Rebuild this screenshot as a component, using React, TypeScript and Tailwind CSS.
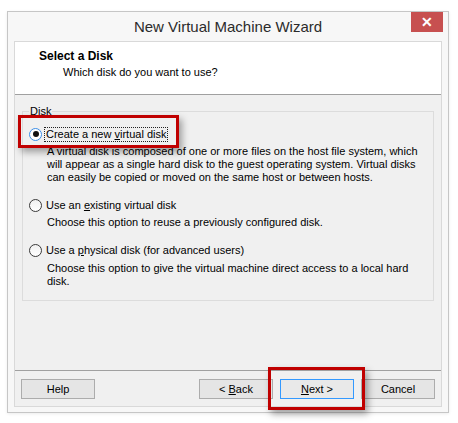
import React from "react";

type RadioOption = {
  label: React.ReactNode;
  description: React.ReactNode;
  checked?: boolean;
};

function RadioDot({ checked }: { checked?: boolean }) {
  return (
    <span
      className={
        checked
          ? "flex h-[13px] w-[13px] shrink-0 items-center justify-center rounded-full border border-[#3c8ee6] bg-white"
          : "flex h-[13px] w-[13px] shrink-0 items-center justify-center rounded-full border border-[#3a3a3a] bg-gradient-to-b from-[#f0f0f0] to-white"
      }
    >
      {checked && <span className="h-[6px] w-[6px] rounded-full bg-[#111]" />}
    </span>
  );
}

function DiskOption({
  option,
  first,
  last,
}: {
  option: RadioOption;
  first?: boolean;
  last?: boolean;
}) {
  return (
    <div className={first ? "" : "mt-[13px]"}>
      <div className="flex h-[16px] items-center gap-[2px]">
        <RadioDot checked={option.checked} />
        <span
          className={
            option.checked
              ? "border border-dotted border-[#222] px-[1px] leading-[13px]"
              : "border border-transparent px-[1px] leading-[13px]"
          }
        >
          {option.label}
        </span>
      </div>
      <p
        className={
          last
            ? "mt-[4px] whitespace-nowrap pl-[18px] leading-[13px]"
            : "mt-[3px] whitespace-nowrap pl-[18px] leading-[13px]"
        }
      >
        {option.description}
      </p>
    </div>
  );
}

function WizardButton({
  children,
  focused,
}: {
  children: React.ReactNode;
  focused?: boolean;
}) {
  return (
    <button
      className={
        focused
          ? "h-[20px] w-[74px] border border-[#3399ff] bg-[#e9e9e9] text-center leading-[18px] text-black"
          : "h-[20px] w-[74px] border border-[#acacac] bg-[#e5e5e5] text-center leading-[18px] text-black"
      }
    >
      {children}
    </button>
  );
}

const options: RadioOption[] = [
  {
    label: (
      <>
        Create a new <u>v</u>irtual disk
      </>
    ),
    description: (
      <>
        A virtual disk is composed of one or more files on the host file system, which
        <br />
        will appear as a single hard disk to the guest operating system. Virtual disks
        <br />
        can easily be copied or moved on the same host or between hosts.
      </>
    ),
    checked: true,
  },
  {
    label: (
      <>
        Use an <u>e</u>xisting virtual disk
      </>
    ),
    description: <>Choose this option to reuse a previously configured disk.</>,
  },
  {
    label: (
      <>
        Use a <u>p</u>hysical disk (for advanced users)
      </>
    ),
    description: (
      <>
        Choose this option to give the virtual machine direct access to a local hard
        <br />
        disk.
      </>
    ),
  },
];

export default function App() {
  return (
    <div className="relative h-[423px] w-[458px] overflow-hidden bg-white pl-[7px] pt-[11px] font-['Liberation_Sans',sans-serif] text-[11px] text-black">
      {/* dialog window */}
      <div className="flex h-[402px] w-[442px] flex-col border border-[#c6c6c6] bg-[#f7f7f7] shadow-[0_1px_3px_rgba(0,0,0,0.08)]">
        <div className="grid h-[29px] grid-cols-[1fr_auto_1fr]">
          <div />
          <div className="text-[15px] leading-[29px] text-[#2b2b2b]">
            New Virtual Machine Wizard
          </div>
          <div className="flex justify-end pr-[5px]">
            <div className="flex h-[20px] w-[32px] items-center justify-center bg-[#c75050] text-[14px] font-bold leading-none text-white">
              ✕
            </div>
          </div>
        </div>

        <div className="mx-[6px] mb-[5px] flex flex-1 flex-col border border-[#d9d9d9] bg-[#f0f0f0]">
          <div className="h-[53px] border-b border-[#a0a0a0] bg-white pl-[24px] pt-[6px]">
            <div className="text-[12px] font-bold leading-[16px]">Select a Disk</div>
            <div className="pl-[24px] leading-[16px]">Which disk do you want to use?</div>
          </div>

          <div className="flex-1 px-[7px] pt-[9px]">
            <fieldset className="border border-[#dcdcdc] px-[6px] pb-[12px] pt-[8px]">
              <legend className="px-[1px] leading-[14px]">Disk</legend>
              {options.map((option, i) => (
                <DiskOption
                  key={i}
                  option={option}
                  first={i === 0}
                  last={i === options.length - 1}
                />
              ))}
            </fieldset>
          </div>

          <div className="flex items-center border-t border-[#a0a0a0] px-[6px] pb-[7px] pt-[8px]">
            <WizardButton>Help</WizardButton>
            <div className="ml-auto flex gap-[7px]">
              <WizardButton>
                &lt; <u>B</u>ack
              </WizardButton>
              <WizardButton focused>
                <u>N</u>ext &gt;
              </WizardButton>
              <WizardButton>Cancel</WizardButton>
            </div>
          </div>
        </div>
      </div>

      {/* red callouts */}
      <div className="absolute left-[18px] top-[115px] h-[33px] w-[161px] border-[3px] border-[#c00000] shadow-[3px_4px_7px_rgba(0,0,0,0.35)]" />
      <div className="absolute left-[268px] top-[367px] h-[43px] w-[97px] border-[3px] border-[#c00000] shadow-[3px_4px_7px_rgba(0,0,0,0.35)]" />
    </div>
  );
}
